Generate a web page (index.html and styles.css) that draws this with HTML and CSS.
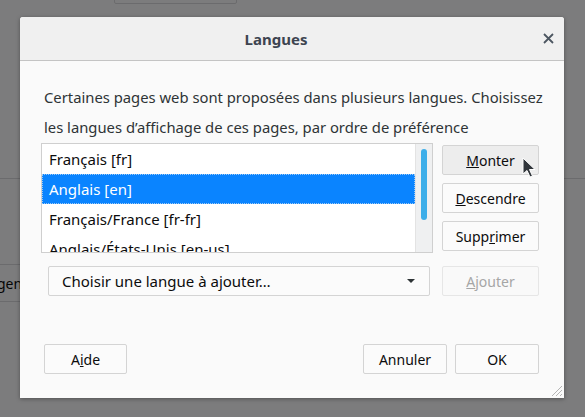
FILE: index.html
```html
<!DOCTYPE html>
<html lang="fr">
<head>
    <meta charset="UTF-8">
    <meta name="viewport" content="width=device-width, initial-scale=1.0">
    <title>Langues</title>
    <link rel="stylesheet" href="styles.css">
</head>
<body>
    <!-- preferences page sitting behind the modal -->
    <div class="page">
        <div class="page-box"></div>
        <div class="page-rule"></div>
        <div class="page-button">Agencement</div>
    </div>

    <div class="overlay">
        <div class="dialog">
            <div class="titlebar">
                <span class="title">Langues</span>
                <button class="close" aria-label="Fermer">
                    <svg width="11" height="11" viewBox="0 0 11 11">
                        <path d="M1 1 L10 10 M10 1 L1 10" stroke="#4c5661" stroke-width="1.8" fill="none"/>
                    </svg>
                </button>
            </div>

            <div class="content">
                <p class="intro">Certaines pages web sont proposées dans plusieurs langues. Choisissez<br>les langues d’affichage de ces pages, par ordre de préférence</p>

                <div class="list-row">
                    <div class="listbox">
                        <ul class="items">
                            <li>Français [fr]</li>
                            <li class="selected">Anglais [en]</li>
                            <li>Français/France [fr-fr]</li>
                            <li>Anglais/États-Unis [en-us]</li>
                        </ul>
                        <div class="scrollbar"><div class="thumb"></div></div>
                    </div>
                    <div class="side-buttons">
                        <button class="btn hover"><u>M</u>onter</button>
                        <button class="btn"><u>D</u>escendre</button>
                        <button class="btn">Supp<u>r</u>imer</button>
                    </div>
                </div>

                <div class="add-row">
                    <div class="select">
                        <span>Choisir une langue à ajouter…</span>
                        <span class="caret"></span>
                    </div>
                    <button class="btn" disabled><u>A</u>jouter</button>
                </div>

                <div class="footer">
                    <button class="btn help">A<u>i</u>de</button>
                    <div class="spacer"></div>
                    <button class="btn footer-btn">Annuler</button>
                    <button class="btn footer-btn">OK</button>
                </div>
            </div>

            <svg class="grip" width="14" height="14" viewBox="0 0 14 14">
                <path d="M13 3 L3 13 M13 7 L7 13 M13 11 L11 13" stroke="#b4b4b4" stroke-width="1" fill="none"/>
            </svg>
        </div>

        <!-- mouse pointer resting on "Monter" -->
        <svg class="pointer" width="16" height="22" viewBox="0 0 16 22">
            <path d="M1 1 L1 17 L5 13.5 L8 20 L10.5 19 L7.5 12.5 L13 12.5 Z" fill="#31363b" stroke="#ffffff" stroke-width="1" stroke-linejoin="round"/>
        </svg>
    </div>
</body>
</html>
```

FILE: styles.css
```css
body {
    margin: 0;
    width: 585px;
    height: 417px;
    overflow: hidden;
    font-family: "Noto Sans", "Open Sans", sans-serif;
    font-size: 15px;
    color: #0c0c0d;
}
.page {
    height: 417px;
    background-color: #f9f9fa;
    overflow: hidden;
}
.page-box {
    margin: -30px 0 0 114px;
    width: 121px;
    height: 32px;
    border: 1px solid #d7d7db;
    border-radius: 2px;
}
.page-rule {
    margin-top: 174px;
    height: 1px;
    background-color: #d7d7db;
}
.page-button {
    margin: 85px 0 0 -13px;
    width: 40px;
    height: 36px;
    line-height: 38px;
    border: 1px solid #d7d7db;
    font-size: 14px;
    white-space: nowrap;
    overflow: hidden;
    color: #0c0c0d;
}
.overlay {
    position: absolute;
    inset: 0;
    background-color: rgba(0, 0, 0, 0.5);
}
.dialog {
    position: absolute;
    left: 20px;
    top: 17px;
    width: 544px;
    height: 381px;
    background-color: #fafafa;
    border-radius: 3px 3px 0 0;
    box-shadow: 0 1px 4px rgba(0, 0, 0, 0.35);
    overflow: hidden;
}
.titlebar {
    height: 43px;
    display: flex;
    align-items: center;
    background-color: #f0f0f0;
    border-bottom: 1px solid #c4c4c4;
}
.title {
    flex: 1;
    text-align: center;
    font-weight: bold;
    font-size: 15px;
    color: #3d4450;
}
.close {
    width: 32px;
    height: 43px;
    padding: 0 0 0 1px;
    border: none;
    background: transparent;
    display: flex;
    align-items: center;
    justify-content: center;
}
.content {
    padding: 21px 25px 0 21px;
}
.intro {
    margin: 0 0 1px 3px;
    font-size: 14.8px;
    line-height: 30px;
    white-space: nowrap;
    color: #2e3436;
}
.list-row {
    display: flex;
    gap: 9px;
}
.listbox {
    width: 390px;
    height: 108px;
    border: 1px solid #cfcfcf;
    background-color: #fff;
    display: flex;
    overflow: hidden;
}
.items {
    flex: 1;
    list-style: none;
    margin: 0;
    padding: 0;
}
.items li {
    height: 30px;
    line-height: 30px;
    padding-left: 7px;
    white-space: nowrap;
}
.items li.selected {
    background-color: #0a84ff;
    color: #fff;
    outline: 1px dotted #9cc9f5;
    outline-offset: -1px;
}
.scrollbar {
    width: 16px;
    background-color: #eff0f1;
    border-left: 1px solid #e3e3e3;
    padding-top: 5px;
    display: flex;
    justify-content: center;
}
.thumb {
    width: 6px;
    height: 71px;
    border-radius: 3px;
    background-color: #3daee9;
}
.side-buttons {
    display: flex;
    flex-direction: column;
    gap: 8px;
    padding-top: 2px;
}
.btn {
    width: 97px;
    height: 30px;
    padding: 0;
    font-family: inherit;
    font-size: 14px;
    color: #0c0c0d;
    background-color: #fbfbfb;
    border: 1px solid #d4d4d4;
    border-radius: 2px;
}
.btn.hover {
    background-color: #ededed;
}
.btn:disabled {
    color: #a6a6a6;
    border-color: #e6e6e6;
    background-color: #f9f9f9;
}
.add-row {
    margin-top: 13px;
    padding-left: 7px;
    display: flex;
    gap: 12px;
}
.select {
    width: 382px;
    height: 30px;
    box-sizing: border-box;
    border: 1px solid #d4d4d4;
    border-radius: 2px;
    background-color: #fbfbfb;
    display: flex;
    align-items: center;
    justify-content: space-between;
    padding: 0 14px 0 13px;
}
.caret {
    width: 0;
    height: 0;
    border-left: 4px solid transparent;
    border-right: 4px solid transparent;
    border-top: 4px solid #2e3436;
}
.footer {
    margin-top: 48px;
    display: flex;
    gap: 8px;
}
.help {
    width: 83px;
    margin-left: 3px;
}
.spacer {
    flex: 1;
}
.footer-btn {
    width: 84px;
}
.grip {
    position: absolute;
    right: 1px;
    bottom: 1px;
}
.pointer {
    position: absolute;
    left: 522px;
    top: 157px;
}
```
